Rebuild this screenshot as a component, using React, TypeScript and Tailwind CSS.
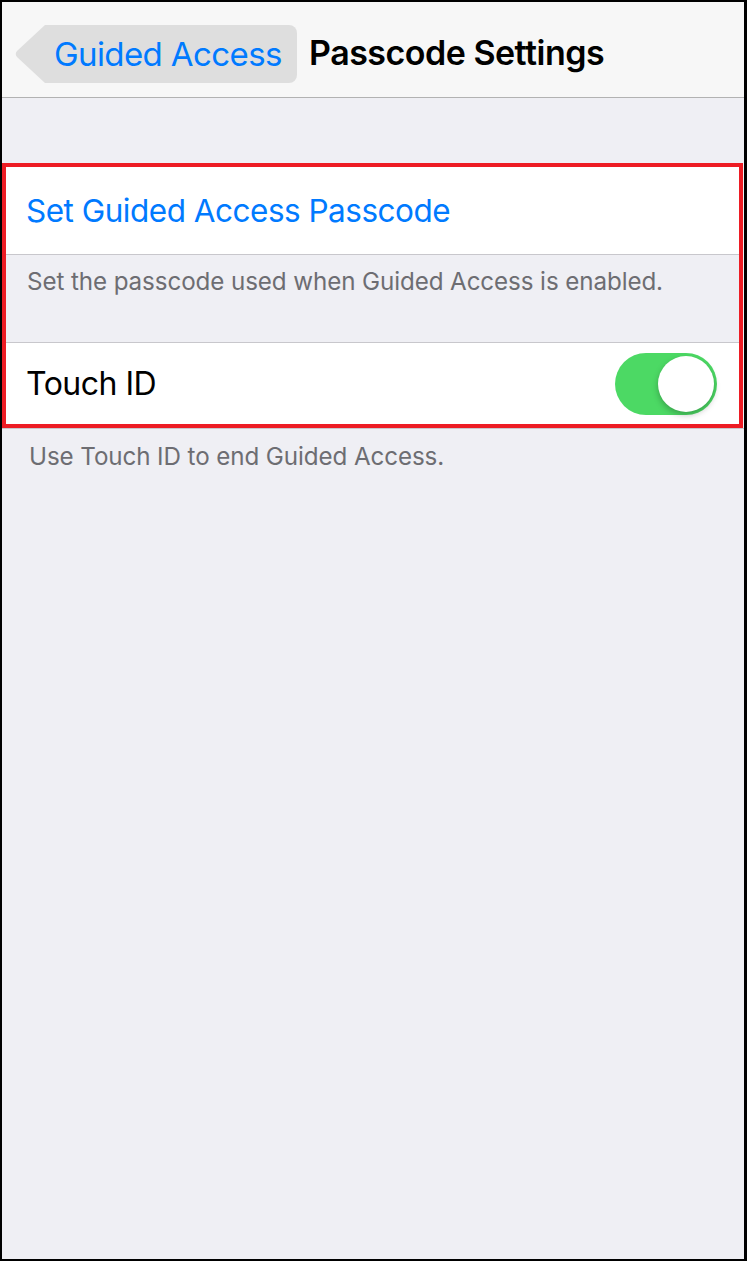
import React from "react";

const font = { fontFamily: "Inter, 'Liberation Sans', sans-serif" };

export default function App() {
  return (
    <div
      className="w-[747px] h-[1261px] border-black border-t-2 border-l-2 border-b-2 border-r-[3px] bg-[#efeff4] flex flex-col"
      style={font}
    >
      {/* Nav bar */}
      <div className="h-[95px] bg-[#f7f7f7] border-b border-[#b2b2b2] flex items-center pl-[11px] shrink-0 box-content">
        <div className="flex h-[58px] mt-[9px]">
          <svg width="32" height="58" viewBox="0 0 32 58" className="block">
            <path d="M32 0 L4 26 Q1.5 29 4 32 L32 58 Z" fill="#dedede" />
          </svg>
          <div className="h-[58px] w-[252px] bg-[#dedede] rounded-r-[8px] flex items-center pl-[9px]">
            <span className="text-[33px] leading-none text-[#007aff] tracking-[-0.6px]">Guided Access</span>
          </div>
        </div>
        <span className="ml-[12px] mt-[7px] text-[34px] leading-none font-semibold text-black tracking-[-0.5px]">
          Passcode Settings
        </span>
      </div>

      <div className="h-[65px] shrink-0" />

      {/* Highlighted group */}
      <div className="border-4 border-[#ed1c24] mr-px">
        <div className="h-[87px] bg-white flex items-center pl-[20px] border-b border-[#c8c7cc] box-content">
          <span className="text-[31.5px] leading-none text-[#007aff] tracking-[-0.5px]">Set Guided Access Passcode</span>
        </div>
        <div className="h-[88px] pt-[15px] pl-[21px] border-b border-[#c8c7cc]">
          <span className="block text-[24.2px] leading-none text-[#6d6d72] tracking-[-0.1px]">
            Set the passcode used when Guided Access is enabled.
          </span>
        </div>
        <div className="h-[81px] bg-white flex items-center justify-between pl-[20px] pr-[22px]">
          <span className="text-[32px] leading-none text-black tracking-[-0.5px]">Touch ID</span>
          <div className="w-[102px] h-[62px] rounded-full bg-[#4cd964] relative">
            <div className="absolute right-[3px] top-[3px] w-[56px] h-[56px] rounded-full bg-white shadow-[0_3px_6px_rgba(0,0,0,0.25)]" />
          </div>
        </div>
      </div>
      <div className="h-px bg-[#c8c7cc]" />
      <div className="pl-[27px] pt-[16px]">
        <span className="text-[24.2px] leading-none text-[#6d6d72] tracking-[-0.1px]">Use Touch ID to end Guided Access.</span>
      </div>
    </div>
  );
}
